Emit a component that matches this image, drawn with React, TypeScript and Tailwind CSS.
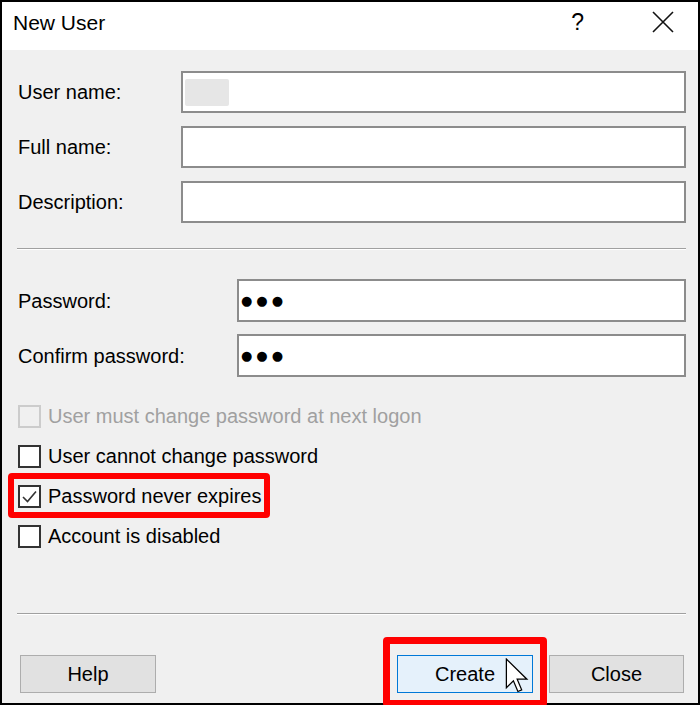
import React from 'react';

const font = { fontFamily: '"Liberation Sans", Arial, sans-serif' };

const fields = ['User name:', 'Full name:', 'Description:'];

const options = [
  { label: 'User must change password at next logon', checked: false, disabled: true },
  { label: 'User cannot change password', checked: false, disabled: false },
  { label: 'Password never expires', checked: true, disabled: false },
  { label: 'Account is disabled', checked: false, disabled: false },
];

const Separator = ({ className }: { className: string }) => (
  <div className={`-ml-px h-[2px] border-t border-[#a0a0a0] border-b border-b-white ${className}`} />
);

const Checkbox = ({ checked, disabled }: { checked: boolean; disabled: boolean }) => (
  <div
    className={`w-[23px] h-[23px] border-2 flex items-center justify-center ${
      disabled ? 'border-[#cccccc] bg-[#f0f0f0]' : 'border-[#333333] bg-white'
    }`}
  >
    {checked && (
      <svg width="17" height="17" viewBox="0 0 17 17">
        <path d="M2 9 L6.5 13.5 L15 3.5" fill="none" stroke="#333333" strokeWidth="1.6" />
      </svg>
    )}
  </div>
);

export default function App() {
  return (
    <div
      className="relative w-[700px] h-[705px] border-2 border-black bg-[#f0f0f0] flex flex-col text-[20px] text-black"
      style={font}
    >
      {/* title bar */}
      <div className="h-[48px] bg-white flex items-start pl-[11px] pt-[8px]">
        <span className="text-[21px] leading-[26px]">New User</span>
        <span className="ml-auto mr-[68px] text-[23px] leading-[26px] mt-[-1px]">?</span>
        <svg width="22" height="22" viewBox="0 0 22 22" className="mr-[24px] mt-[1px]">
          <path d="M1 1 L21 21 M21 1 L1 21" stroke="#111" strokeWidth="1.6" />
        </svg>
      </div>

      <div className="flex-1 flex flex-col pl-[16px] pr-[12px]">
        {/* name fields */}
        <div className="grid grid-cols-[163px_1fr] gap-y-[13px] pt-[21px]">
          {fields.map((f, i) => (
            <React.Fragment key={f}>
              <div className="h-[42px] flex items-center">{f}</div>
              <div className="h-[42px] border-2 border-[#8c8c8c] bg-white flex items-center px-[2px]">
                {i === 0 && <div className="w-[44px] h-[27px] rounded-[2px] bg-[#e6e6e6]" />}
              </div>
            </React.Fragment>
          ))}
        </div>

        <Separator className="mt-[25px]" />

        {/* passwords */}
        <div className="grid grid-cols-[219px_1fr] gap-y-[12px] mt-[29px]">
          {['Password:', 'Confirm password:'].map((f) => (
            <React.Fragment key={f}>
              <div className="h-[43px] flex items-center">{f}</div>
              <div className="h-[43px] border-2 border-[#8c8c8c] bg-white flex items-center pl-[2px]">
                <span
                  className="text-[13px] tracking-[4px] leading-none"
                  style={{ fontFamily: '"DejaVu Sans", sans-serif' }}
                >
                  ●●●
                </span>
              </div>
            </React.Fragment>
          ))}
        </div>

        {/* options */}
        <div className="flex flex-col mt-[19px]">
          {options.map((o) => (
            <div key={o.label} className="h-[40px] flex items-center gap-[7px]">
              <Checkbox checked={o.checked} disabled={o.disabled} />
              <span className={o.disabled ? 'text-[#a0a0a0]' : ''}>{o.label}</span>
            </div>
          ))}
        </div>

        <Separator className="mt-[57px]" />

        {/* buttons */}
        <div className="flex items-center mt-[40px] pl-[2px] pr-[2px]">
          <button className="w-[136px] h-[38px] border border-[#adadad] bg-[#e1e1e1]">Help</button>
          <button className="ml-auto w-[136px] h-[38px] border border-[#0078d7] bg-[#e5f1fb]">Create</button>
          <button className="ml-[16px] w-[135px] h-[38px] border border-[#adadad] bg-[#e1e1e1]">Close</button>
        </div>
      </div>

      {/* highlight boxes */}
      <div className="absolute left-[6px] top-[471px] w-[262px] h-[45px] border-[6px] border-[#ff0000] rounded-[4px]" />
      <div className="absolute left-[381px] top-[635px] w-[164px] h-[70px] border-[7px] border-[#ff0000] rounded-[4px]" />

      {/* mouse pointer */}
      <svg
        width="24"
        height="36"
        viewBox="0 0 13 20"
        className="absolute left-[503px] top-[656px]"
      >
        <path
          d="M0.6 0.6 L0.6 16.5 L4.5 12.7 L7 18.6 L9.1 17.7 L6.6 11.8 L12 11.8 Z"
          fill="white"
          stroke="black"
          strokeWidth="0.7"
          strokeLinejoin="miter"
        />
      </svg>
    </div>
  );
}
